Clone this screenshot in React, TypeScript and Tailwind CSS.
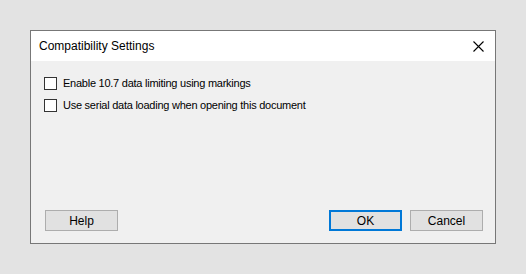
import React from 'react';

const Checkbox: React.FC<{ label: string }> = ({ label }) => (
  <label className="flex items-center h-[22px]">
    <span className="w-[13px] h-[13px] border border-[#333333] bg-white" />
    <span className="ml-[6px] text-[11px] tracking-[-0.25px] text-black">{label}</span>
  </label>
);

const App: React.FC = () => {
  return (
    <div
      className="w-[526px] h-[274px] bg-[#e3e3e3] pt-[30px] pl-[30px]"
      style={{ fontFamily: '"Liberation Sans", Arial, sans-serif' }}
    >
      <div className="w-[466px] h-[214px] border border-[#777777] bg-[#f0f0f0] flex flex-col">
        {/* Title bar */}
        <div className="h-[30px] bg-white flex items-center justify-between pl-[8px] pr-[11px]">
          <span className="text-[12px] text-black">Compatibility Settings</span>
          <svg width="11" height="11" viewBox="0 0 11 11" className="text-black">
            <path d="M0.5 0.5 L10.5 10.5 M10.5 0.5 L0.5 10.5" stroke="currentColor" strokeWidth="1.1" />
          </svg>
        </div>

        {/* Options */}
        <div className="flex flex-col pl-[13px] pt-[11px]">
          <Checkbox label="Enable 10.7 data limiting using markings" />
          <Checkbox label="Use serial data loading when opening this document" />
        </div>

        {/* Buttons */}
        <div className="mt-auto flex items-center pl-[14px] pr-[12px] pb-[12px]">
          <button className="w-[73px] h-[21px] bg-[#e1e1e1] border border-[#adadad] text-[12px] text-black">
            Help
          </button>
          <div className="ml-auto flex gap-[8px]">
            <button className="w-[73px] h-[21px] bg-[#e1e1e1] border-2 border-[#0078d7] text-[12px] text-black">
              OK
            </button>
            <button className="w-[73px] h-[21px] bg-[#e1e1e1] border border-[#adadad] text-[12px] text-black">
              Cancel
            </button>
          </div>
        </div>
      </div>
    </div>
  );
};

export default App;
